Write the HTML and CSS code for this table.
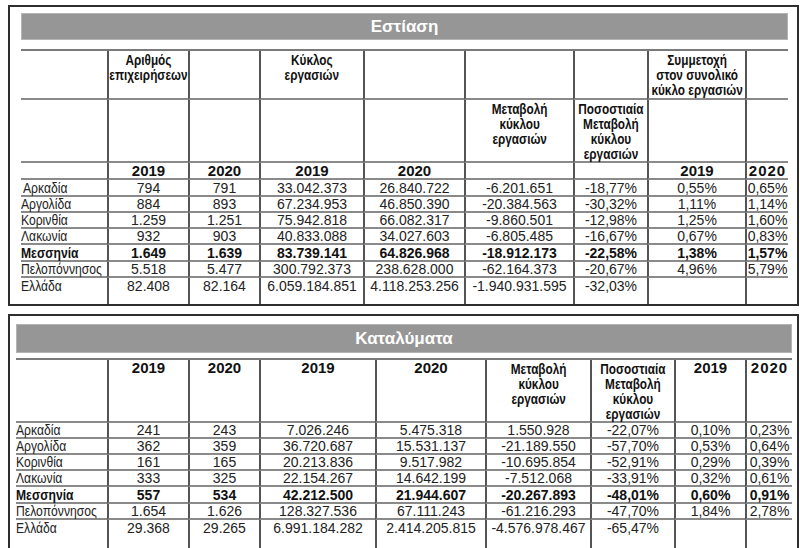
FILE: index.html
```html
<!DOCTYPE html>
<html lang="el">
<head>
<meta charset="utf-8">
<title>Εστίαση - Καταλύματα</title>
<link rel="stylesheet" href="styles.css">
</head>
<body>
<div class="panel panel-top">
  <div class="bar">Εστίαση</div>
  <table class="grid grid-top">
    <colgroup><col><col><col><col><col><col><col><col><col></colgroup>
    <tr class="ha">
      <td></td>
      <td class="hd"><div class="sq"><span>Αριθμός<br>επιχειρήσεων</span></div></td>
      <td></td>
      <td class="hd"><div class="sq"><span>Κύκλος<br>εργασιών</span></div></td>
      <td></td>
      <td></td>
      <td></td>
      <td class="hd"><div class="sq"><span>Συμμετοχή<br>στον συνολικό<br>κύκλο εργασιών</span></div></td>
      <td></td>
    </tr>
    <tr class="hb">
      <td></td><td></td><td></td><td></td><td></td>
      <td class="hd"><div class="sq"><span>Μεταβολή<br>κύκλου<br>εργασιών</span></div></td>
      <td class="hd"><div class="sq"><span>Ποσοστιαία<br>Μεταβολή<br>κύκλου<br>εργασιών</span></div></td>
      <td></td><td></td>
    </tr>
    <tr class="hc">
      <td></td>
      <td class="yr">2019</td><td class="yr">2020</td><td class="yr">2019</td><td class="yr">2020</td>
      <td></td><td></td>
      <td class="yr">2019</td><td class="yr yr-wide">2020</td>
    </tr>
    <tr class="r r17"><td class="name indent"><span>Αρκαδία</span></td><td>794</td><td>791</td><td>33.042.373</td><td>26.840.722</td><td>-6.201.651</td><td>-18,77%</td><td>0,55%</td><td>0,65%</td></tr>
    <tr class="r"><td class="name"><span>Αργολίδα</span></td><td>884</td><td>893</td><td>67.234.953</td><td>46.850.390</td><td>-20.384.563</td><td>-30,32%</td><td>1,11%</td><td>1,14%</td></tr>
    <tr class="r"><td class="name"><span>Κορινθία</span></td><td>1.259</td><td>1.251</td><td>75.942.818</td><td>66.082.317</td><td>-9.860.501</td><td>-12,98%</td><td>1,25%</td><td>1,60%</td></tr>
    <tr class="r"><td class="name"><span>Λακωνία</span></td><td>932</td><td>903</td><td>40.833.088</td><td>34.027.603</td><td>-6.805.485</td><td>-16,67%</td><td>0,67%</td><td>0,83%</td></tr>
    <tr class="r r17 bold"><td class="name"><span>Μεσσηνία</span></td><td>1.649</td><td>1.639</td><td>83.739.141</td><td>64.826.968</td><td>-18.912.173</td><td>-22,58%</td><td>1,38%</td><td>1,57%</td></tr>
    <tr class="r"><td class="name"><span>Πελοπόννησος</span></td><td>5.518</td><td>5.477</td><td>300.792.373</td><td>238.628.000</td><td>-62.164.373</td><td>-20,67%</td><td>4,96%</td><td>5,79%</td></tr>
    <tr class="r last"><td class="name"><span>Ελλάδα</span></td><td>82.408</td><td>82.164</td><td>6.059.184.851</td><td>4.118.253.256</td><td>-1.940.931.595</td><td>-32,03%</td><td></td><td></td></tr>
    <tr class="fill fill-top"><td></td><td></td><td></td><td></td><td></td><td></td><td></td><td></td><td></td></tr>
  </table>
</div>

<div class="panel panel-bottom">
  <div class="bar bar-b">Καταλύματα</div>
  <table class="grid grid-bottom">
    <colgroup><col><col><col><col><col><col><col><col><col></colgroup>
    <tr class="hx">
      <td></td>
      <td class="yr">2019</td><td class="yr">2020</td><td class="yr">2019</td><td class="yr">2020</td>
      <td class="hd"><div class="sq"><span>Μεταβολή<br>κύκλου<br>εργασιών</span></div></td>
      <td class="hd"><div class="sq"><span>Ποσοστιαία<br>Μεταβολή<br>κύκλου<br>εργασιών</span></div></td>
      <td class="yr">2019</td><td class="yr yr-wide">2020</td>
    </tr>
    <tr class="r"><td class="name"><span>Αρκαδία</span></td><td>241</td><td>243</td><td>7.026.246</td><td>5.475.318</td><td>1.550.928</td><td>-22,07%</td><td>0,10%</td><td>0,23%</td></tr>
    <tr class="r r15"><td class="name"><span>Αργολίδα</span></td><td>362</td><td>359</td><td>36.720.687</td><td>15.531.137</td><td>-21.189.550</td><td>-57,70%</td><td>0,53%</td><td>0,64%</td></tr>
    <tr class="r"><td class="name"><span>Κορινθία</span></td><td>161</td><td>165</td><td>20.213.836</td><td>9.517.982</td><td>-10.695.854</td><td>-52,91%</td><td>0,29%</td><td>0,39%</td></tr>
    <tr class="r r15"><td class="name"><span>Λακωνία</span></td><td>333</td><td>325</td><td>22.154.267</td><td>14.642.199</td><td>-7.512.068</td><td>-33,91%</td><td>0,32%</td><td>0,61%</td></tr>
    <tr class="r r17 bold"><td class="name"><span>Μεσσηνία</span></td><td>557</td><td>534</td><td>42.212.500</td><td>21.944.607</td><td>-20.267.893</td><td>-48,01%</td><td>0,60%</td><td>0,91%</td></tr>
    <tr class="r"><td class="name"><span>Πελοπόννησος</span></td><td>1.654</td><td>1.626</td><td>128.327.536</td><td>67.111.243</td><td>-61.216.293</td><td>-47,70%</td><td>1,84%</td><td>2,78%</td></tr>
    <tr class="r r15 last"><td class="name"><span>Ελλάδα</span></td><td>29.368</td><td>29.265</td><td>6.991.184.282</td><td>2.414.205.815</td><td>-4.576.978.467</td><td>-65,47%</td><td></td><td></td></tr>
    <tr class="fill fill-bottom"><td></td><td></td><td></td><td></td><td></td><td></td><td></td><td></td><td></td></tr>
  </table>
</div>
</body>
</html>
```

FILE: styles.css
```css
html, body {
  margin: 0;
  padding: 0;
  background: #ffffff;
}

body {
  width: 800px;
  height: 548px;
  overflow: hidden;
  font-family: "Liberation Sans", Arial, sans-serif;
  color: #222;
}

.panel {
  box-sizing: border-box;
  width: 791px;
  margin-left: 8px;
  border: 2px solid #2e2e2e;
}

.panel-top {
  margin-top: 5px;
  padding: 6px 9px 0 11px;
}

.panel-bottom {
  margin-top: 8px;
  padding: 8px 5px 0 6px;
}

.bar {
  box-sizing: border-box;
  height: 27px;
  margin-bottom: 9px;
  background: #969696;
  border: 1px solid #b4b4b4;
  color: #ffffff;
  font-weight: bold;
  font-size: 17px;
  line-height: 25px;
  text-align: center;
}

.bar-b {
  height: 29px;
  line-height: 27px;
  margin-bottom: 5px;
}

.grid {
  border-collapse: separate;
  border-spacing: 0;
  table-layout: fixed;
  border-top: 2px solid #7a7a7a;
}

.grid-top { width: 767px; }
.grid-bottom { width: 776px; }

.grid-top col:nth-child(1) { width: 86px; }
.grid-top col:nth-child(2) { width: 81px; }
.grid-top col:nth-child(3) { width: 71px; }
.grid-top col:nth-child(4) { width: 104px; }
.grid-top col:nth-child(5) { width: 101px; }
.grid-top col:nth-child(6) { width: 109px; }
.grid-top col:nth-child(7) { width: 74px; }
.grid-top col:nth-child(8) { width: 98px; }
.grid-top col:nth-child(9) { width: 43px; }

.grid-bottom col:nth-child(1) { width: 91px; }
.grid-bottom col:nth-child(2) { width: 81px; }
.grid-bottom col:nth-child(3) { width: 71px; }
.grid-bottom col:nth-child(4) { width: 116px; }
.grid-bottom col:nth-child(5) { width: 110px; }
.grid-bottom col:nth-child(6) { width: 105px; }
.grid-bottom col:nth-child(7) { width: 84px; }
.grid-bottom col:nth-child(8) { width: 71px; }
.grid-bottom col:nth-child(9) { width: 47px; }

.grid td {
  padding: 0;
  border-bottom: 2px solid #8a8a8a;
  border-left: 2px solid #555;
  text-align: center;
  vertical-align: middle;
  font-size: 14px;
  line-height: 14px;
  white-space: nowrap;
  color: #222;
}

.grid td:first-child {
  border-left: none;
  text-align: left;
}

.grid .ha td,
.grid .hb td,
.grid .hx td {
  vertical-align: top;
}

.ha { height: 49px; }
.hb { height: 63px; }
.hc { height: 16px; }
.hx { height: 63px; }

.r { height: 16px; }
.r15 { height: 15px; }
.r17 { height: 17px; }

.last td { border-bottom: none; }

.fill td { border-bottom: none; }
.fill-top { height: 10px; }
.fill-bottom { height: 15px; }

.grid td.hd {
  font-weight: bold;
  font-size: 15.5px;
  line-height: 15px;
  color: #111;
  padding-top: 1px;
}

.sq {
  display: flex;
  justify-content: center;
}

.sq span {
  display: block;
  text-align: center;
  white-space: nowrap;
  transform: scaleX(0.76);
  transform-origin: center top;
}

.grid td.yr {
  font-weight: bold;
  font-size: 15px;
  line-height: 15px;
  color: #111;
}

.grid td.yr-wide {
  letter-spacing: 1px;
}

.grid td.name {
  font-size: 15px;
}

.grid td.name span {
  display: inline-block;
  transform: scaleX(0.81);
  transform-origin: left center;
}

.grid td.indent {
  padding-left: 2px;
}

.bold td {
  font-weight: bold;
  color: #111;
}
```
